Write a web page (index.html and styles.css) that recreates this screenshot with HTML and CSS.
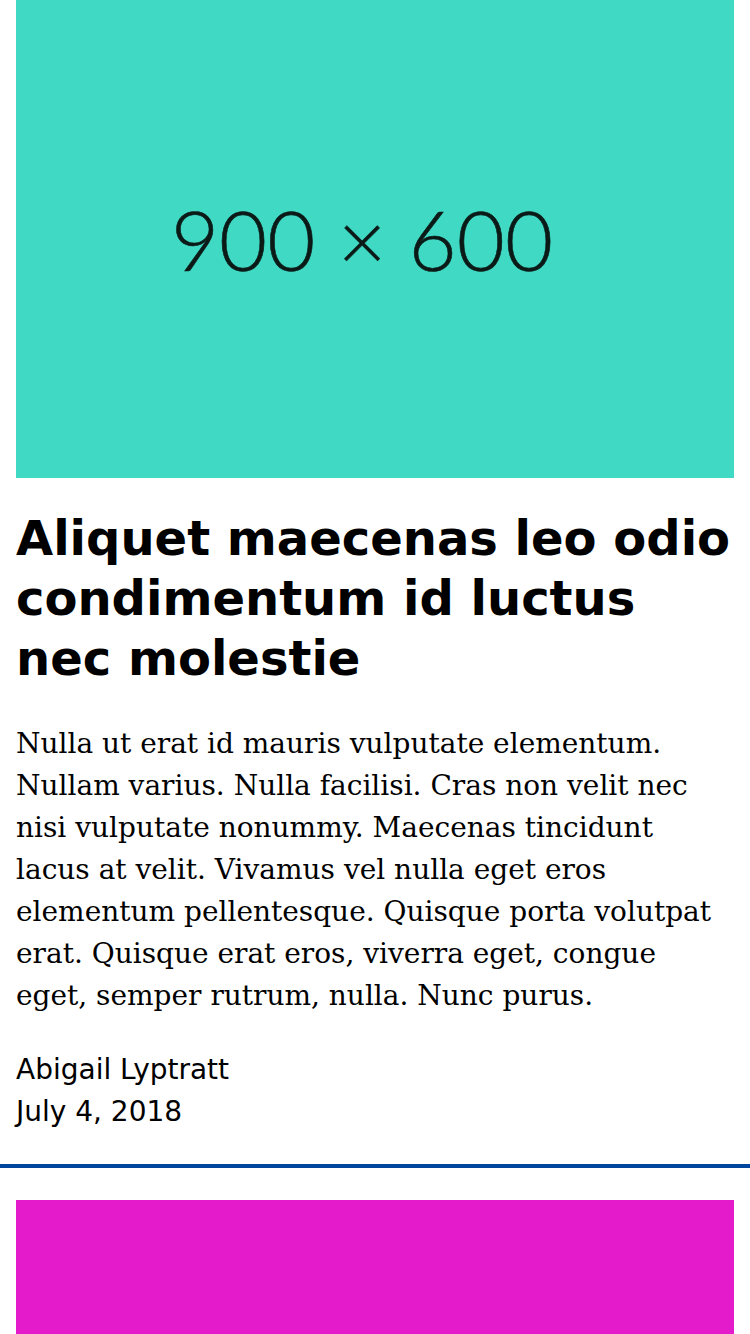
FILE: index.html
```html
<!DOCTYPE html>
<html>
<head>
<meta charset="utf-8">
<link rel="stylesheet" href="styles.css">
</head>
<body>
<article class="card">
  <div class="hero teal"><span class="hero-label">900 × 600</span></div>
  <h1 class="title">Aliquet maecenas leo odio condimentum id luctus nec molestie</h1>
  <p class="body">Nulla ut erat id mauris vulputate elementum. Nullam varius. Nulla facilisi. Cras non velit nec nisi vulputate nonummy. Maecenas tincidunt lacus at velit. Vivamus vel nulla eget eros elementum pellentesque. Quisque porta volutpat erat. Quisque erat eros, viverra eget, congue eget, semper rutrum, nulla. Nunc purus.</p>
  <div class="meta">
    <div class="author">Abigail Lyptratt</div>
    <div class="date">July 4, 2018</div>
  </div>
</article>
<hr class="divider">
<article class="card">
  <div class="hero magenta"></div>
</article>
</body>
</html>
```
FILE: styles.css
```css
html, body {
  margin: 0;
  padding: 0;
  background: #fff;
  overflow: hidden;
}
body {
  width: 750px;
  height: 1334px;
}
.card {
  padding: 0 16px;
}
.hero {
  height: 478px;
  display: flex;
  align-items: center;
  justify-content: center;
}
.teal { background: #3fd9c4; }
.magenta { background: #e31bcb; margin-top: 32px; }
.hero-label {
  font-family: "Lato", "Open Sans", sans-serif;
  font-weight: 300;
  font-size: 83px;
  color: #0b1a17;
  margin: 0 26px 0 0;
  -webkit-text-stroke: 0.6px #0b1a17;
}
.title {
  font-family: "DejaVu Sans", sans-serif;
  font-weight: bold;
  font-size: 48px;
  line-height: 60px;
  margin: 30px 0 0;
  color: #000;
}
.body {
  font-family: "DejaVu Serif", serif;
  font-size: 28px;
  line-height: 42px;
  margin: 35px 0 0;
  color: #000;
}
.meta {
  font-family: "DejaVu Sans", sans-serif;
  font-size: 28px;
  line-height: 42px;
  margin-top: 32px;
  color: #000;
}
.divider {
  border: 0;
  height: 4px;
  background: #00479d;
  margin: 31px 0 0;
}
```
